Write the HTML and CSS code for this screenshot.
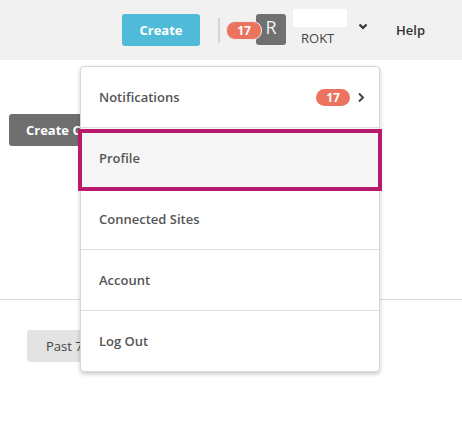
FILE: index.html
```html
<!DOCTYPE html>
<html>
<head>
<meta charset="utf-8">
<link rel="stylesheet" href="styles.css">
</head>
<body>
<header class="topbar">
  <button class="btn-create">Create</button>
  <span class="sep"></span>
  <span class="avatar-wrap">
    <span class="badge badge-top">17</span>
    <span class="avatar">R</span>
  </span>
  <span class="user">
    <span class="user-logo"></span>
    <span class="user-name">ROKT</span>
  </span>
  <svg class="caret" width="10" height="7" viewBox="0 0 10 7"><path d="M1.5 1.5 L5 5 L8.5 1.5" fill="none" stroke="#333" stroke-width="2.2"/></svg>
  <span class="help">Help</span>
</header>
<main class="content">
  <button class="btn-gray">Create Campaign</button>
  <hr class="rule">
  <button class="btn-light">Past 7 days</button>
</main>
<div class="dropdown">
  <div class="item">
    <span>Notifications</span>
    <span class="item-right">
      <span class="badge">17</span>
      <svg width="8" height="11" viewBox="0 0 8 11"><path d="M2 1.5 L6 5.5 L2 9.5" fill="none" stroke="#444" stroke-width="2"/></svg>
    </span>
  </div>
  <div class="item item-active">Profile</div>
  <div class="item">Connected Sites</div>
  <div class="item">Account</div>
  <div class="item item-last">Log Out</div>
</div>
</body>
</html>
```
FILE: styles.css
```css
* { box-sizing: border-box; }
html, body { margin: 0; padding: 0; }
body {
  width: 462px;
  height: 424px;
  overflow: hidden;
  background: #fff;
  font-family: "Open Sans", "Liberation Sans", sans-serif;
  font-size: 13px;
  color: #555;
  position: relative;
}
button { font-family: inherit; border: 0; cursor: pointer; }

.topbar {
  height: 60px;
  background: #f1f1f1;
  display: flex;
  align-items: center;
}
.btn-create {
  margin-left: 122px;
  width: 78px;
  height: 32px;
  background: #4fbbd9;
  color: #fff;
  font-size: 13px;
  font-weight: 700;
  border-radius: 3px;
}
.sep {
  margin-left: 18px;
  width: 2px;
  height: 25px;
  background: #d4d4d4;
}
.avatar-wrap {
  margin-left: 6px;
  display: flex;
  align-items: center;
}
.badge {
  display: inline-flex;
  align-items: center;
  justify-content: center;
  width: 34px;
  height: 17px;
  border-radius: 9px;
  background: #ec735f;
  color: #fff;
  font-size: 12px;
  font-weight: 700;
}
.badge-top {
  position: relative;
  z-index: 1;
  width: 36px;
  height: 19px;
  border: 1px solid #ebebeb;
}
.avatar {
  margin-left: -6px;
  width: 30px;
  height: 31px;
  background: #707070;
  color: #f2f2f2;
  border-radius: 3px;
  font-size: 18px;
  display: flex;
  justify-content: center;
  align-items: flex-start;
  padding-top: 1px;
  line-height: 24px;
  margin-top: -1px;
}
.user {
  margin-left: 7px;
  align-self: flex-start;
  display: flex;
  flex-direction: column;
  padding-top: 9px;
}
.user-logo {
  width: 54px;
  height: 18px;
  background: #fff;
}
.user-name {
  margin-top: 3px;
  padding-left: 8px;
  font-size: 13px;
  color: #444;
  line-height: 16px;
}
.caret {
  margin-left: 11px;
  margin-top: -7px;
}
.help {
  margin-left: 28px;
  color: #333;
  font-weight: 600;
  font-size: 13px;
}

.content {
  display: flex;
  flex-direction: column;
  align-items: flex-start;
}
.btn-gray {
  margin-top: 54px;
  margin-left: 9px;
  width: 150px;
  height: 32px;
  padding: 0 17px;
  text-align: left;
  background: #6f6f6f;
  color: #fff;
  font-size: 13px;
  font-weight: 700;
  border-radius: 3px;
}
.rule {
  align-self: stretch;
  margin: 153px 0 0 0;
  border: 0;
  border-top: 1px solid #dcdcdc;
}
.btn-light {
  margin-top: 30px;
  margin-left: 27px;
  width: 120px;
  height: 32px;
  padding: 0 19px;
  text-align: left;
  background: #e3e3e3;
  color: #444;
  font-size: 13px;
  border-radius: 3px;
}

.dropdown {
  position: absolute;
  left: 80px;
  top: 66px;
  width: 300px;
  background: #fff;
  border: 1px solid #d8d8d8;
  border-radius: 4px;
  box-shadow: 0 2px 4px rgba(0,0,0,0.22);
}
.item {
  height: 61px;
  display: flex;
  align-items: center;
  justify-content: space-between;
  padding: 0 14px 0 18px;
  border-bottom: 1px solid #dedede;
  font-weight: 600;
  color: #555;
}
.item-last { border-bottom: 0; height: 60px; }
.item-right {
  display: flex;
  align-items: center;
  gap: 7px;
}
.item-active {
  position: relative;
  background: #f6f6f6;
}
.item-active::after {
  content: "";
  position: absolute;
  left: -3px;
  right: -3px;
  top: 1px;
  bottom: -3px;
  border: 4px solid #b81a6c;
}
```
